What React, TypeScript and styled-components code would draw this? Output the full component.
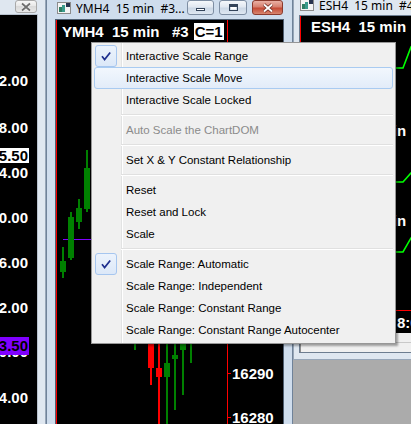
import React from "react";
import styled, { createGlobalStyle } from "styled-components";

const GlobalStyle = createGlobalStyle`
  html, body {
    margin: 0;
    padding: 0;
    background: #ababab;
  }
  body {
    font-family: "Noto Sans", "Liberation Sans", sans-serif;
  }
`;

const Desktop = styled.div`
  position: relative;
  width: 411px;
  height: 424px;
  overflow: hidden;
  background: #ababab;
`;

const Win = styled.div<{
  $left: number;
  $top: number;
  $width: number;
  $height: number;
  $active?: boolean;
  $padL?: number;
  $padR?: number;
  $padB?: number;
}>`
  position: absolute;
  left: ${(p) => p.$left}px;
  top: ${(p) => p.$top}px;
  width: ${(p) => p.$width}px;
  height: ${(p) => p.$height}px;
  box-sizing: border-box;
  display: flex;
  flex-direction: column;
  border: 1px solid ${(p) => (p.$active ? "#6f8299" : "#97a6b8")};
  background: ${(p) => (p.$active ? "#cfdded" : "#dfe7f0")};
  padding: 0 ${(p) => p.$padR ?? 8}px ${(p) => p.$padB ?? 8}px
    ${(p) => p.$padL ?? 8}px;
`;

const TitleBar = styled.div<{ $h: number }>`
  flex: none;
  height: ${(p) => p.$h}px;
  display: flex;
  align-items: center;
  overflow: hidden;
`;

const IconBox = styled.span<{ $ml: number }>`
  display: flex;
  flex: none;
  margin-left: ${(p) => p.$ml}px;
`;

const TitleText = styled.span`
  flex: 1;
  margin-left: 5px;
  font-size: 12px;
  color: #000;
  white-space: pre;
  overflow: hidden;
`;

const Captions = styled.div<{ $mt: number }>`
  display: flex;
  align-self: flex-start;
  margin-top: ${(p) => p.$mt}px;
  flex: none;
`;

const CapBtn = styled.div<{
  $kind: "min" | "max" | "close" | "idle";
  $w: number;
  $h: number;
  $mr: number;
}>`
  width: ${(p) => p.$w}px;
  height: ${(p) => p.$h}px;
  margin-right: ${(p) => p.$mr}px;
  box-sizing: border-box;
  display: flex;
  align-items: center;
  justify-content: center;
  border-radius: 3px;
  border: 1px solid
    ${(p) =>
      p.$kind === "close" ? "#8c3b2e" : p.$kind === "idle" ? "#a9a9a9" : "#7e8ea3"};
  background: ${(p) =>
    p.$kind === "close"
      ? "linear-gradient(#eab0a4, #d7806f 45%, #c44a35 55%, #d8866f)"
      : p.$kind === "idle"
      ? "linear-gradient(#f7f7f7, #e6e6e6 50%, #dadada 50%, #e8e8e8)"
      : "linear-gradient(#f5f8fb, #e1e8f1 45%, #ccd8e6 55%, #dfe8f2)"};
`;

const Client = styled.div<{ $line: string }>`
  flex: 1;
  min-height: 0;
  display: flex;
  flex-direction: column;
  border: 1px solid ${(p) => p.$line};
  background: #000;
`;

const Chart = styled.div<{ $edge?: boolean }>`
  position: relative;
  flex: 1;
  min-height: 0;
  display: flex;
  flex-direction: column;
  background: #000;
  border-left: ${(p) => (p.$edge ? "1px solid #ff0000" : "none")};
  overflow: hidden;
  font-family: "Liberation Sans", Arial, sans-serif;
  font-weight: bold;
  font-size: 15px;
  color: #fff;
`;

const Drawing = styled.svg`
  position: absolute;
  left: 0;
  top: 0;
  width: 100%;
  height: 100%;
`;

const ChartHeader = styled.div<{ $x: number; $y: number }>`
  position: relative;
  display: flex;
  align-items: center;
  padding: ${(p) => p.$y}px 0 0 ${(p) => p.$x}px;
  line-height: 17px;
  white-space: pre;
`;

const Badge = styled.span`
  margin-left: 5px;
  padding: 0 1px;
  background: #fff;
  color: #000;
`;

const PriceTag = styled.div<{
  $top: number;
  $left?: number;
  $right?: number;
  $bg?: string;
  $fg?: string;
  $lh?: number;
}>`
  position: absolute;
  top: ${(p) => p.$top}px;
  ${(p) => (p.$left !== undefined ? `left: ${p.$left}px;` : "")}
  ${(p) => (p.$right !== undefined ? `right: ${p.$right}px;` : "")}
  padding: 0 1px;
  line-height: ${(p) => p.$lh ?? 15}px;
  background: ${(p) => p.$bg ?? "transparent"};
  color: ${(p) => p.$fg ?? "#fff"};
  white-space: nowrap;
`;

const Pane = styled.div<{ $h: number }>`
  position: relative;
  flex: none;
  height: ${(p) => p.$h}px;
`;

const StatusStrip = styled.div`
  flex: none;
  height: 19px;
  display: flex;
  background: #f0f0f0;
`;

const Sunken = styled.div`
  flex: 1;
  margin-top: 9px;
  border-left: 1px solid #8f8f8f;
  border-top: 1px solid #c9c9c9;
`;

const Menu = styled.div`
  position: absolute;
  left: 91px;
  top: 42px;
  width: 305px;
  box-sizing: border-box;
  padding: 2px;
  border: 1px solid #979797;
  background: linear-gradient(
      to right,
      transparent 29px,
      #e2e3e3 29px,
      #e2e3e3 30px,
      #ffffff 30px,
      #ffffff 31px,
      transparent 31px
    ),
    #f0f0f0;
  box-shadow: 2px 2px 2px rgba(0, 0, 0, 0.35);
  font-family: "Liberation Sans", Arial, sans-serif;
  font-size: 11.5px;
  z-index: 10;
`;

const MenuItem = styled.div<{ $hot?: boolean; $disabled?: boolean }>`
  height: 22px;
  box-sizing: border-box;
  display: flex;
  align-items: center;
  border-radius: 3px;
  border: 1px solid ${(p) => (p.$hot ? "#a9cbf1" : "transparent")};
  background: ${(p) =>
    p.$hot ? "linear-gradient(#f2f7fd, #e2ecf9)" : "transparent"};
  color: ${(p) => (p.$disabled ? "#8b8b8b" : "#000")};
  white-space: nowrap;
`;

const CheckSlot = styled.span<{ $on?: boolean }>`
  flex: none;
  width: 22px;
  height: 22px;
  margin: -1px 9px -1px 0;
  box-sizing: border-box;
  display: flex;
  align-items: center;
  justify-content: center;
  border-radius: 3px;
  border: 1px solid ${(p) => (p.$on ? "#a6c6ef" : "transparent")};
  background: ${(p) =>
    p.$on ? "linear-gradient(#ecf3fc, #dce8f8)" : "transparent"};
`;

const Separator = styled.div`
  height: 8px;
  margin-left: 27px;
  background: linear-gradient(
    to bottom,
    transparent 3px,
    #e0e0e0 3px,
    #e0e0e0 4px,
    #ffffff 4px,
    #ffffff 5px,
    transparent 5px
  );
`;

const ChartIcon = () => (
  <svg width="14" height="12" viewBox="0 0 14 12">
    <rect x="0.5" y="0.5" width="13" height="11" fill="#f4f4f4" stroke="#8c8c8c" />
    <rect x="2" y="5" width="3" height="5" fill="#2f7d62" />
    <rect x="5" y="3" width="3" height="7" fill="#3a9a8c" />
    <rect x="9" y="1" width="4" height="4" fill="#28344f" />
  </svg>
);

const MinGlyph = () => (
  <svg width="11" height="8" viewBox="0 0 11 8">
    <rect x="1.5" y="4.5" width="8" height="2" fill="#fff" stroke="#34445a" />
  </svg>
);

const MaxGlyph = () => (
  <svg width="11" height="9" viewBox="0 0 11 9">
    <rect x="1.5" y="1.5" width="8" height="6" fill="none" stroke="#34445a" />
    <rect x="2" y="2" width="7" height="2" fill="#34445a" />
    <rect x="3" y="4" width="5" height="2.5" fill="#fff" />
  </svg>
);

const CloseGlyph = ({ color, edge }: { color: string; edge: string }) => (
  <svg width="12" height="10" viewBox="0 0 12 10">
    <path d="M2 1.5 L10 8.5 M10 1.5 L2 8.5" stroke={edge} strokeWidth="3.4" />
    <path d="M2 1.5 L10 8.5 M10 1.5 L2 8.5" stroke={color} strokeWidth="1.8" />
  </svg>
);

const CheckMark = () => (
  <svg width="12" height="12" viewBox="0 0 12 12">
    <path
      d="M2 6.2 L4.6 9.6 L10.2 2.4"
      fill="none"
      stroke="#1e2f8e"
      strokeWidth="1.7"
      strokeLinejoin="miter"
    />
  </svg>
);

type Candle = {
  x: number;
  bt: number;
  bb: number;
  wt: number;
  wb: number;
  up: boolean;
};

const candles: Candle[] = [
  { x: 3, bt: 241, bb: 252, wt: 227, wb: 258, up: true },
  { x: 11, bt: 197, bb: 238, wt: 192, wb: 240, up: true },
  { x: 19, bt: 188, bb: 202, wt: 179, wb: 209, up: true },
  { x: 27, bt: 148, bb: 189, wt: 130, wb: 192, up: true },
  { x: 35, bt: 120, bb: 150, wt: 110, wb: 156, up: true },
  { x: 75, bt: 290, bb: 310, wt: 280, wb: 330, up: true },
  { x: 91, bt: 300, bb: 348, wt: 290, wb: 365, up: false },
  { x: 99, bt: 348, bb: 357, wt: 300, wb: 410, up: false },
  { x: 107, bt: 343, bb: 357, wt: 300, wb: 410, up: true },
  { x: 115, bt: 335, bb: 339, wt: 300, wb: 390, up: true },
  { x: 123, bt: 300, bb: 330, wt: 290, wb: 375, up: true },
  { x: 131, bt: 290, bb: 315, wt: 280, wb: 343, up: true },
];

const leftLabels = [
  { top: 58, text: "2.00" },
  { top: 105, text: "8.00" },
  { top: 150, text: "4.00" },
  { top: 195, text: "0.00" },
  { top: 240, text: "6.00" },
  { top: 285, text: "2.00" },
  { top: 329, text: "0.00" },
  { top: 375, text: "4.00" },
];

type Entry = {
  label: string;
  checked?: boolean;
  hot?: boolean;
  disabled?: boolean;
};

const menuGroups: Entry[][] = [
  [
    { label: "Interactive Scale Range", checked: true },
    { label: "Interactive Scale Move", hot: true },
    { label: "Interactive Scale Locked" },
  ],
  [{ label: "Auto Scale the ChartDOM", disabled: true }],
  [{ label: "Set X & Y Constant Relationship" }],
  [{ label: "Reset" }, { label: "Reset and Lock" }, { label: "Scale" }],
  [
    { label: "Scale Range: Automatic", checked: true },
    { label: "Scale Range: Independent" },
    { label: "Scale Range: Constant Range" },
    { label: "Scale Range: Constant Range Autocenter" },
  ],
];

const App = () => {
  return (
    <>
      <GlobalStyle />
      <Desktop>
        {/* left window, mostly off screen */}
        <Win $left={-300} $top={-8} $width={346} $height={450} $padR={7}>
          <TitleBar $h={21}>
            <TitleText />
            <Captions $mt={7}>
              <CapBtn $kind="idle" $w={22} $h={13} $mr={1}>
                <CloseGlyph color="#6e6e6e" edge="#f4f4f4" />
              </CapBtn>
            </Captions>
          </TitleBar>
          <Client $line="#b8c2ce">
            <Chart>
              {leftLabels.map((l, i) => (
                <PriceTag key={i} $top={l.top} $right={8}>
                  {l.text}
                </PriceTag>
              ))}
              <PriceTag $top={133} $right={8} $bg="#ffffff" $fg="#000">
                5.50
              </PriceTag>
              <PriceTag $top={322} $right={8} $bg="#8000ff" $fg="#000" $lh={18}>
                3.50
              </PriceTag>
            </Chart>
          </Client>
        </Win>

        {/* YMH4 window */}
        <Win $left={46} $top={-4} $width={247} $height={440} $active>
          <TitleBar $h={22}>
            <IconBox $ml={2}>
              <ChartIcon />
            </IconBox>
            <TitleText>YMH4  15 min  #3...</TitleText>
            <Captions $mt={3}>
              <CapBtn $kind="min" $w={27} $h={15} $mr={5}>
                <MinGlyph />
              </CapBtn>
              <CapBtn $kind="max" $w={28} $h={15} $mr={5}>
                <MaxGlyph />
              </CapBtn>
              <CapBtn $kind="close" $w={31} $h={15} $mr={1}>
                <CloseGlyph color="#ffffff" edge="#6b2a20" />
              </CapBtn>
            </Captions>
          </TitleBar>
          <Client $line="#4f5f72">
            <Chart $edge>
              <Drawing>
                <line x1="6" y1="219.5" x2="170" y2="219.5" stroke="#8000ff" />
                {candles.map((c, i) => (
                  <g key={i} fill={c.up ? "#008000" : "#ff0000"}>
                    <rect x={c.x + 2} y={c.wt} width="2" height={c.wb - c.wt} />
                    <rect x={c.x} y={c.bt} width="6" height={c.bb - c.bt} />
                  </g>
                ))}
                <rect x="170" y="0" width="1" height="420" fill="#ff0000" />
                <rect x="170" y="353" width="4" height="1" fill="#ff0000" />
                <rect x="170" y="397" width="4" height="1" fill="#ff0000" />
              </Drawing>
              <ChartHeader $x={5} $y={3}>
                YMH4  15 min   #3<Badge>C=1</Badge>
              </ChartHeader>
              <PriceTag $top={346} $left={174}>
                16290
              </PriceTag>
              <PriceTag $top={390} $left={174}>
                16280
              </PriceTag>
            </Chart>
          </Client>
        </Win>

        {/* ESH4 window */}
        <Win
          $left={293}
          $top={-6}
          $width={130}
          $height={366}
          $padL={5}
          $padB={6}
        >
          <TitleBar $h={20}>
            <IconBox $ml={1}>
              <ChartIcon />
            </IconBox>
            <TitleText>ESH4  15 min  #4...</TitleText>
          </TitleBar>
          <Client $line="#6d7d90">
            <Chart $edge>
              <Pane $h={104}>
                <Drawing>
                  <polyline
                    points="95,52 102,52 110,31 118,20"
                    fill="none"
                    stroke="#00ff00"
                    strokeWidth="1.6"
                  />
                </Drawing>
                <ChartHeader $x={10} $y={2}>
                  ESH4  15 min
                </ChartHeader>
              </Pane>
              <Pane $h={90}>
                <Drawing>
                  <polyline
                    points="94,62 102,62 110,53 118,50"
                    fill="none"
                    stroke="#00ff00"
                    strokeWidth="1.6"
                  />
                </Drawing>
                <ChartHeader $x={10} $y={2}>
                  ESH4  15 min
                </ChartHeader>
              </Pane>
              <Pane $h={123}>
                <Drawing>
                  <polyline
                    points="94,42 102,42 110,28 118,22"
                    fill="none"
                    stroke="#00ff00"
                    strokeWidth="1.6"
                  />
                  <rect x="0" y="100" width="200" height="1" fill="#ff0000" />
                </Drawing>
                <ChartHeader $x={10} $y={2}>
                  ESH4  15 min
                </ChartHeader>
                <PriceTag $top={104} $left={95} $lh={17}>
                  8:00
                </PriceTag>
              </Pane>
            </Chart>
            <StatusStrip>
              <Sunken />
            </StatusStrip>
          </Client>
        </Win>

        <Menu>
          {menuGroups.map((group, gi) => (
            <React.Fragment key={gi}>
              {gi > 0 && <Separator />}
              {group.map((item) => (
                <MenuItem
                  key={item.label}
                  $hot={item.hot}
                  $disabled={item.disabled}
                >
                  <CheckSlot $on={item.checked}>
                    {item.checked && <CheckMark />}
                  </CheckSlot>
                  {item.label}
                </MenuItem>
              ))}
            </React.Fragment>
          ))}
        </Menu>
      </Desktop>
    </>
  );
};

export default App;
